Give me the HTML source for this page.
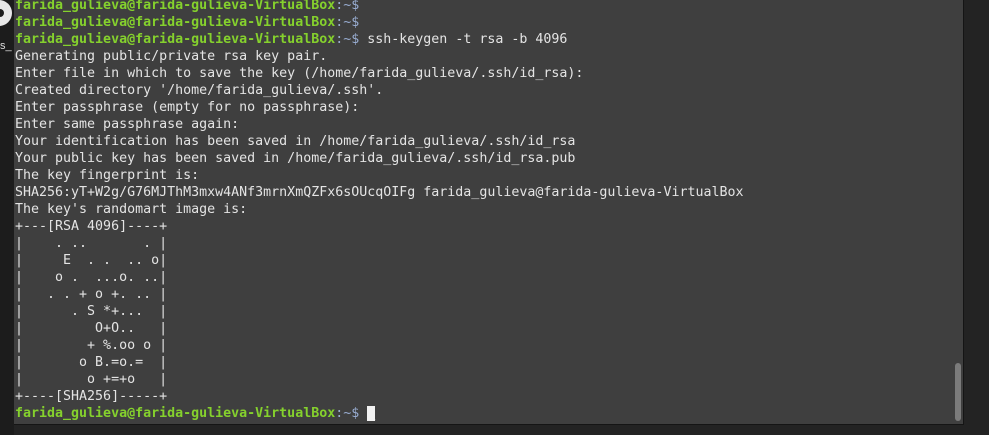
<!DOCTYPE html>
<html><head><style>
html,body{margin:0;padding:0;width:989px;height:435px;overflow:hidden;background:#232323;}
#left{position:absolute;left:0;top:0;width:14px;height:435px;background:#1c1c1c;}
#circ{position:absolute;left:-14px;top:0;width:26px;height:26px;border-radius:50%;background:#e8e8e8;}
#circ2{position:absolute;left:-4px;top:9px;width:8px;height:8px;border-radius:50%;background:#1c1c1c;}
#lbl{position:absolute;left:0;top:40px;color:#ddd;font:11px "Liberation Sans",sans-serif;}
#term{position:absolute;left:14px;top:0;width:949px;height:424px;background:#3f3f3f;border-right:1px solid #151515;border-bottom:1px solid #151515;}
pre{position:absolute;left:1px;top:-3px;margin:0;font:13.3px/17px "DejaVu Sans Mono","Liberation Mono",monospace;color:#e4e4e4;}
.g{color:#85d12d;font-weight:bold}
.b{color:#98acd0}
.cur{background:#f2f2f2;color:#f2f2f2}
#sb{position:absolute;left:941px;top:363px;width:6px;height:58px;border-radius:3px;background:#7b7b7b;}
</style></head><body>
<div id="left"><div id="circ"></div><div id="circ2"></div><div id="lbl">s_</div></div>
<div id="term"><pre><span class="g">farida_gulieva@farida-gulieva-VirtualBox</span><span class="b">:~$</span>
<span class="g">farida_gulieva@farida-gulieva-VirtualBox</span><span class="b">:~$</span>
<span class="g">farida_gulieva@farida-gulieva-VirtualBox</span><span class="b">:~$</span> ssh-keygen -t rsa -b 4096
Generating public/private rsa key pair.
Enter file in which to save the key (/home/farida_gulieva/.ssh/id_rsa):
Created directory '/home/farida_gulieva/.ssh'.
Enter passphrase (empty for no passphrase):
Enter same passphrase again:
Your identification has been saved in /home/farida_gulieva/.ssh/id_rsa
Your public key has been saved in /home/farida_gulieva/.ssh/id_rsa.pub
The key fingerprint is:
SHA256:yT+W2g/G76MJThM3mxw4ANf3mrnXmQZFx6sOUcqOIFg farida_gulieva@farida-gulieva-VirtualBox
The key's randomart image is:
+---[RSA 4096]----+
|    . ..       . |
|     E  . .  .. o|
|    o .  ...o. ..|
|   . . + o +. .. |
|      . S *+...  |
|         O+O..   |
|        + %.oo o |
|       o B.=o.=  |
|        o +=+o   |
+----[SHA256]-----+
<span class="g">farida_gulieva@farida-gulieva-VirtualBox</span><span class="b">:~$</span> <span class="cur">_</span></pre>
<div id="sb"></div></div>
</body></html>
